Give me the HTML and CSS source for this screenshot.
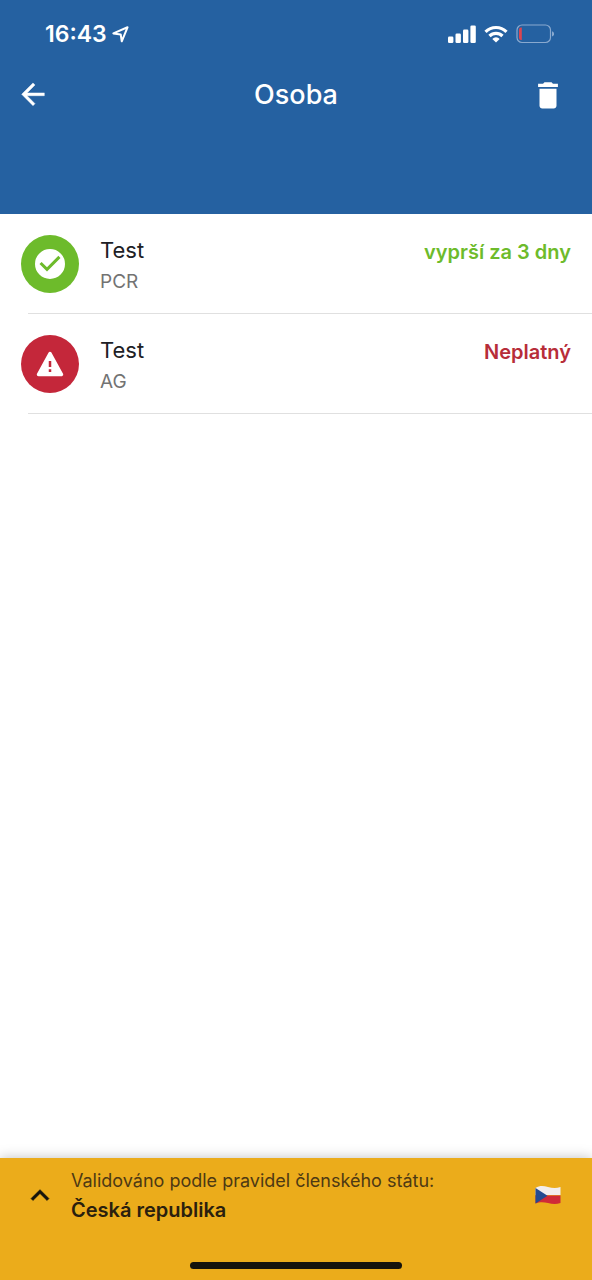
FILE: index.html
```html
<!DOCTYPE html>
<html lang="cs">
<head>
<meta charset="utf-8">
<meta name="viewport" content="width=device-width, initial-scale=1">
<title>Osoba</title>
<link rel="stylesheet" href="styles.css">
</head>
<body>
<header class="header">
  <div class="status">
    <div class="status-time">
      <span>16:43</span>
      <svg width="17" height="17" viewBox="0 0 16 16" fill="none" stroke="currentColor" stroke-width="1.9" stroke-linejoin="round" aria-hidden="true"><path d="M1.300 7 14.600 1.200 9.200 14.400 8.200 8Z"/></svg>
    </div>
    <div class="status-icons">
      <svg width="28" height="18" viewBox="0 0 28 18" fill="currentColor" aria-hidden="true"><rect y="11.5" width="5.4" height="6.500" rx="1.3"/><rect x="7.5" y="8.500" width="5.4" height="9.500" rx="1.3"/><rect x="15" y="4.500" width="5.4" height="13.500" rx="1.3"/><rect x="22.4" y="0.5" width="5.4" height="17.500" rx="1.3"/></svg>
      <svg width="24" height="18" viewBox="0 0 24 18" fill="none" stroke="currentColor" stroke-width="3.2" aria-hidden="true"><path d="M1.5 6.8a15 15 0 0 1 21 0"/><path d="M5.5 11a9.2 9.2 0 0 1 13 0"/><path d="M12 17.6 8.3 13.9a5.2 5.2 0 0 1 7.4 0Z" fill="currentColor" stroke="none"/></svg>
      <svg width="38" height="20" viewBox="0 0 38 20" fill="none" aria-hidden="true"><rect x="1" y="1" width="33.5" height="17.5" rx="5" stroke="#89a9cf" stroke-width="1.2"/><path d="M36 7.2a2.8 2.8 0 0 1 0 5.4Z" fill="#89a9cf"/><path d="M5.8 3.5v12.5H5A2 2 0 0 1 3 14V5.500a2 2 0 0 1 2-2Z" fill="#dc4550"/></svg>
    </div>
  </div>
  <div class="toolbar">
    <button class="icon-button" type="button" aria-label="Zpět">
      <svg width="34" height="34" viewBox="0 0 24 24" fill="currentColor" aria-hidden="true"><path d="M20 10.500H7.830l5.590-5.590L12 3.500l-8 8 8 8 1.410-1.410L7.830 12.500H20z" stroke="currentColor" stroke-width=".3"/></svg>
    </button>
    <h1 class="title">Osoba</h1>
    <button class="icon-button" type="button" aria-label="Smazat">
      <svg width="34" height="34" viewBox="0 0 24 24" fill="currentColor" aria-hidden="true"><path d="M6 19.500c0 1.100.9 2 2 2h8c1.100 0 2-.9 2-2V7.500H6zM19 4h-3.500l-1-1h-5l-1 1H5v2.300h14z"/></svg>
    </button>
  </div>
</header>
<main class="content">
  <ul class="list">
    <li class="item">
      <div class="row">
        <span class="badge badge-valid"><svg width="36" height="36" viewBox="0 0 24 24" fill="#fff" aria-hidden="true"><path d="M12 2a10 10 0 1 0 0 20 10 10 0 0 0 0-20zm-2 15-5-5 1.410-1.410L10 14.170l7.590-7.590L19 8z"/></svg></span>
        <div class="text"><span class="name">Test</span><span class="kind">PCR</span></div>
        <span class="state state-valid">vyprší za 3 dny</span>
      </div>
    </li>
    <li class="item">
      <div class="row">
        <span class="badge badge-invalid"><svg width="28" height="28" viewBox="0 0 28 28" aria-hidden="true"><path d="M14 3.500 25.500 24.500H2.500Z" fill="#fff" stroke="#fff" stroke-width="3.500" stroke-linejoin="round"/><path d="M14 11v6M14 19.300v2.700" stroke="#c4273a" stroke-width="2.500"/></svg></span>
        <div class="text"><span class="name">Test</span><span class="kind">AG</span></div>
        <span class="state state-invalid">Neplatný</span>
      </div>
    </li>
  </ul>
</main>
<footer class="footer">
  <button class="country" type="button">
    <svg width="32" height="32" viewBox="0 0 24 24" fill="#15130c" aria-hidden="true"><path d="M12 8l-6.700 6.700 1.400 1.400L12 10.830l5.300 5.270 1.400-1.400z" stroke="#15130c" stroke-width=".5"/></svg>
    <span class="country-text"><span class="country-label">Validováno podle pravidel členského státu:</span><strong class="country-name">Česká republika</strong></span>
    <svg width="26" height="20" viewBox="0 0 26 20" aria-hidden="true"><path d="M.5 3C5 0 9 1 13 2s8 1.500 12.500 0v8H.5Z" fill="#f2eeee"/><path d="M.5 10.500H25.500V18c-4.500 1.500-8.500 1-12.500 0S5 16.500.5 18.500Z" fill="#cf2a38"/><path d="M.5 3 12.500 10.800.5 18.500Z" fill="#244b91"/></svg>
  </button>
  <div class="home-bar"></div>
</footer>
</body>
</html>
```
FILE: styles.css
```css
* { box-sizing: border-box; }
body {
  display: flex;
  flex-direction: column;
  min-height: 100vh;
  margin: 0;
  background: #fff;
  color: #202024;
  font-family: Inter, "Liberation Sans", sans-serif;
}
button {
  padding: 0;
  border: 0;
  background: none;
  color: inherit;
  font: inherit;
  cursor: pointer;
}
svg { display: block; flex: none; }
.header {
  padding: 20px 0 102px;
  background: #2561a1;
  color: #fff;
}
.status {
  display: flex;
  align-items: center;
  justify-content: space-between;
  padding: 0 38px 0 45px;
}
.status-time {
  display: flex;
  align-items: center;
  gap: 5px;
  font-size: 23px;
  font-weight: 600;
  line-height: 28px;
}
.status-icons { display: flex; align-items: center; gap: 8px; }
.toolbar {
  display: flex;
  align-items: center;
  justify-content: space-between;
  padding: 30px 27px 0 16px;
}
.title {
  margin: 0;
  padding-left: 11px;
  font-size: 27px;
  font-weight: 500;
  line-height: 34px;
}
.content { flex: 1; }
.list { margin: 0; padding: 0; list-style: none; }
.item::after {
  content: "";
  display: block;
  height: 1px;
  margin-left: 28px;
  background: #e0e0e0;
}
.row {
  display: flex;
  align-items: flex-start;
  padding: 21px 21px 14px;
}
.badge {
  display: grid;
  place-items: center;
  width: 58px;
  height: 58px;
  border-radius: 50%;
}
.badge-valid { background: #6dbb2b; }
.badge-invalid { background: #c4273a; }
.text {
  display: flex;
  flex: 1;
  flex-direction: column;
  padding-left: 21px;
}
.name { font-size: 22px; line-height: 30px; }
.kind { color: #737373; font-size: 19px; line-height: 34px; }
.state { font-size: 20px; font-weight: 600; line-height: 34px; }
.state-valid { color: #6dbb2b; }
.state-invalid { color: #b72d39; }
.footer {
  padding: 8px 0 11px;
  background: #ebac1b;
  box-shadow: 0 0 12px rgb(0 0 0 / 25%);
}
.country {
  display: flex;
  align-items: center;
  width: 100%;
  padding: 0 31px 0 24px;
  text-align: left;
}
.country-text {
  display: flex;
  flex: 1;
  flex-direction: column;
  padding: 0 15px;
}
.country-label { color: #4d3914; font-size: 18px; line-height: 30px; }
.country-name { color: #2a200e; font-size: 20px; font-weight: 600; line-height: 28px; }
.home-bar {
  width: 212px;
  height: 7px;
  margin: 38px auto 0;
  border-radius: 4px;
  background: #15130c;
}
```
